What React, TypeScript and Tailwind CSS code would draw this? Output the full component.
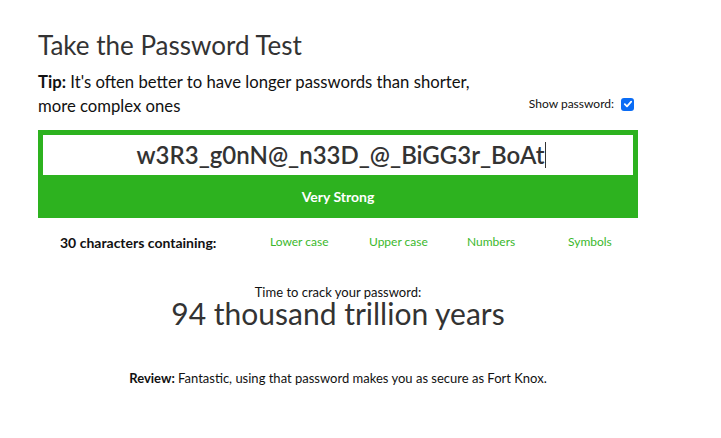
import React from "react";

export default function App() {
  return (
    <div className="w-[721px] h-[438px] bg-white text-[#333] font-['Lato',sans-serif]">
      <div className="ml-[38px] w-[600px] pt-[28px]">
        <h1 className="text-[26px] leading-[34px] font-normal">Take the Password Test</h1>
        <div className="flex items-end justify-between mt-[8px]">
          <p className="text-[16.7px] leading-[24px] text-[#111] w-[450px]">
            <b>Tip:</b> It's often better to have longer passwords than shorter, more complex ones
          </p>
          <label className="flex items-center gap-[7px] text-[12px] text-[#111] mb-[5px] mr-[4px]">
            Show password:
            <span className="w-[13px] h-[13px] rounded-[3px] bg-[#0a6cf5] flex items-center justify-center">
              <svg width="10" height="10" viewBox="0 0 10 10">
                <path d="M1.8 5.2 L4 7.3 L8.2 2.6" fill="none" stroke="white" strokeWidth="1.8" strokeLinecap="round" strokeLinejoin="round" />
              </svg>
            </span>
          </label>
        </div>
        <div className="mt-[12px] bg-[#2db21f] p-[5px] pb-0">
          <div className="bg-white h-[40px] flex items-center justify-center pl-[6px]">
            <span className="text-[24px] font-semibold text-[#333]">w3R3_g0nN@_n33D_@_BiGG3r_BoAt</span>
            <span className="w-px h-[26px] bg-[#333]"></span>
          </div>
          <div className="h-[43px] flex items-center justify-center text-white text-[14px] font-bold">Very Strong</div>
        </div>
        <div className="flex items-center mt-[14px] text-[12px] h-[20px]">
          <div className="w-[232px] pl-[22px] font-bold text-[14px] text-[#111]">30 characters containing:</div>
          <div className="w-[99px] text-[#3bb82c]">Lower case</div>
          <div className="w-[98px] text-[#3bb82c]">Upper case</div>
          <div className="w-[101px] text-[#3bb82c]">Numbers</div>
          <div className="text-[#3bb82c]">Symbols</div>
        </div>
        <div className="mt-[33px] text-center text-[13px] leading-[14px] text-[#111]">Time to crack your password:</div>
        <div className="text-center text-[30px] leading-[28px] text-[#333]">94 thousand trillion years</div>
        <div className="mt-[42px] text-center text-[13px] leading-[18px] text-[#111]">
          <b>Review:</b> Fantastic, using that password makes you as secure as Fort Knox.
        </div>
      </div>
    </div>
  );
}
